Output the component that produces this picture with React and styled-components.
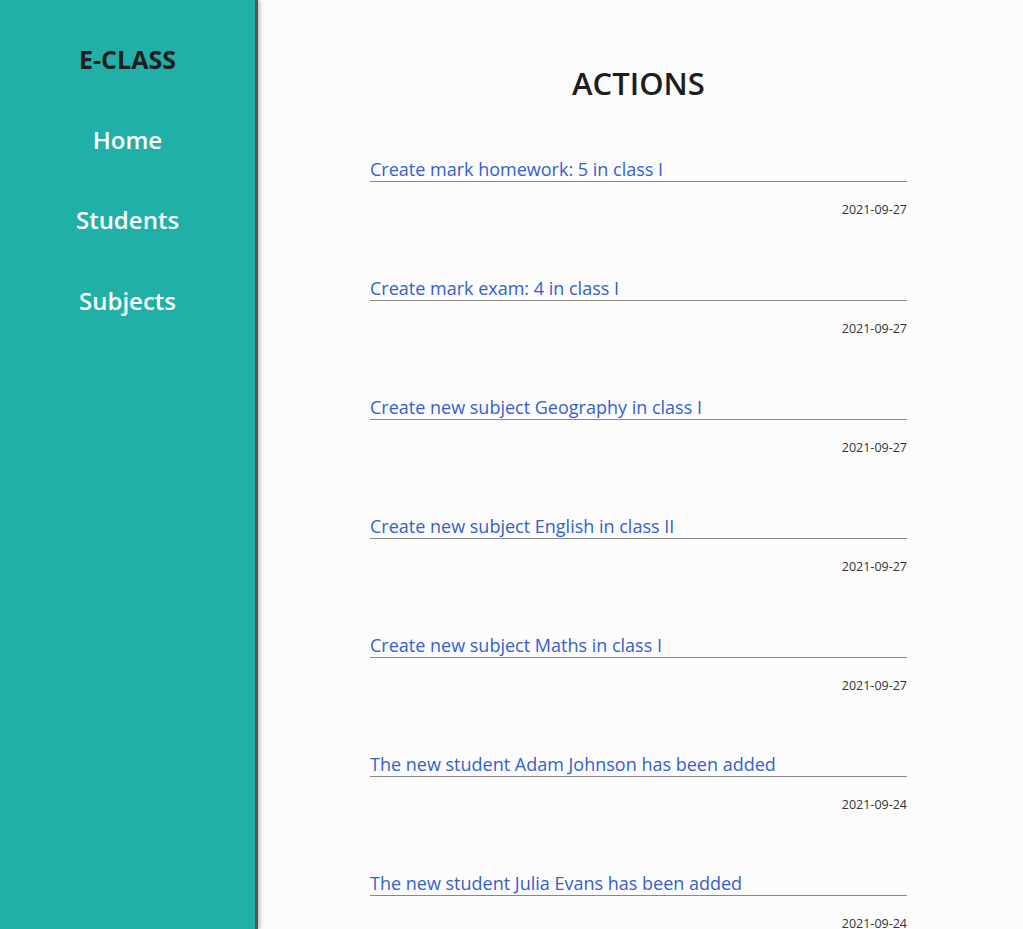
import React from "react";
import styled, { createGlobalStyle } from "styled-components";

const actions = [
  { id: 1, text: "Create mark homework: 5 in class I", date: "2021-09-27" },
  { id: 2, text: "Create mark exam: 4 in class I", date: "2021-09-27" },
  { id: 3, text: "Create new subject Geography in class I", date: "2021-09-27" },
  { id: 4, text: "Create new subject English in class II", date: "2021-09-27" },
  { id: 5, text: "Create new subject Maths in class I", date: "2021-09-27" },
  { id: 6, text: "The new student Adam Johnson has been added", date: "2021-09-24" },
  { id: 7, text: "The new student Julia Evans has been added", date: "2021-09-24" },
];

const Global = createGlobalStyle`
  html, body {
    margin: 0;
    padding: 0;
    height: 100%;
    overflow: hidden;
  }
  body {
    font-family: "Open Sans", "Noto Sans", sans-serif;
    background: #fcfcfc;
  }
`;

export default function App() {
  return (
    <>
      <Global />
      <Layout>
        <Sidebar>
          <Logo>E-CLASS</Logo>
          <NavLink href="#">Home</NavLink>
          <NavLink href="#">Students</NavLink>
          <NavLink href="#">Subjects</NavLink>
        </Sidebar>
        <Main>
          <Title>ACTIONS</Title>
          <List>
            {actions.map((a) => (
              <Item key={a.id}>
                <ActionText href="#">{a.text}</ActionText>
                <ActionDate>{a.date}</ActionDate>
              </Item>
            ))}
          </List>
        </Main>
      </Layout>
    </>
  );
}

// Основна сітка сторінки
const Layout = styled.div`
  display: flex;
  height: 929px;
`;

// Бокова панель
const Sidebar = styled.nav`
  width: 255px;
  flex-shrink: 0;
  background-color: #20b0a8;
  border-right: 3px solid #555;
  box-shadow: 2px 0 4px rgba(0, 0, 0, 0.25);
  display: flex;
  flex-direction: column;
  align-items: center;
  padding-top: 42px;
  gap: 46.5px;
  z-index: 1;
`;

const Logo = styled.div`
  font-size: 25px;
  font-weight: 700;
  color: #1e1e1e;
  line-height: 34px;
`;

const NavLink = styled.a`
  font-size: 24px;
  font-weight: 600;
  color: #fff;
  text-decoration: none;
  line-height: 34px;
`;

// Основна частина
const Main = styled.main`
  flex: 1;
  display: flex;
  flex-direction: column;
  align-items: center;
  padding-top: 62px;
  padding-right: 4px;
`;

const Title = styled.h1`
  margin: 0;
  font-size: 31px;
  font-weight: 600;
  color: #1e1e1e;
  line-height: 42px;
`;

const List = styled.div`
  width: 537px;
  display: flex;
  flex-direction: column;
  gap: 58px;
  margin-top: 53px;
`;

const Item = styled.div`
  display: flex;
  flex-direction: column;
`;

const ActionText = styled.a`
  font-size: 18px;
  color: #3460cf;
  text-decoration: none;
  border-bottom: 1px solid #888;
  line-height: 24px;
`;

const ActionDate = styled.div`
  align-self: flex-end;
  font-size: 12.5px;
  color: #333;
  margin-top: 20px;
  line-height: 16px;
`;
